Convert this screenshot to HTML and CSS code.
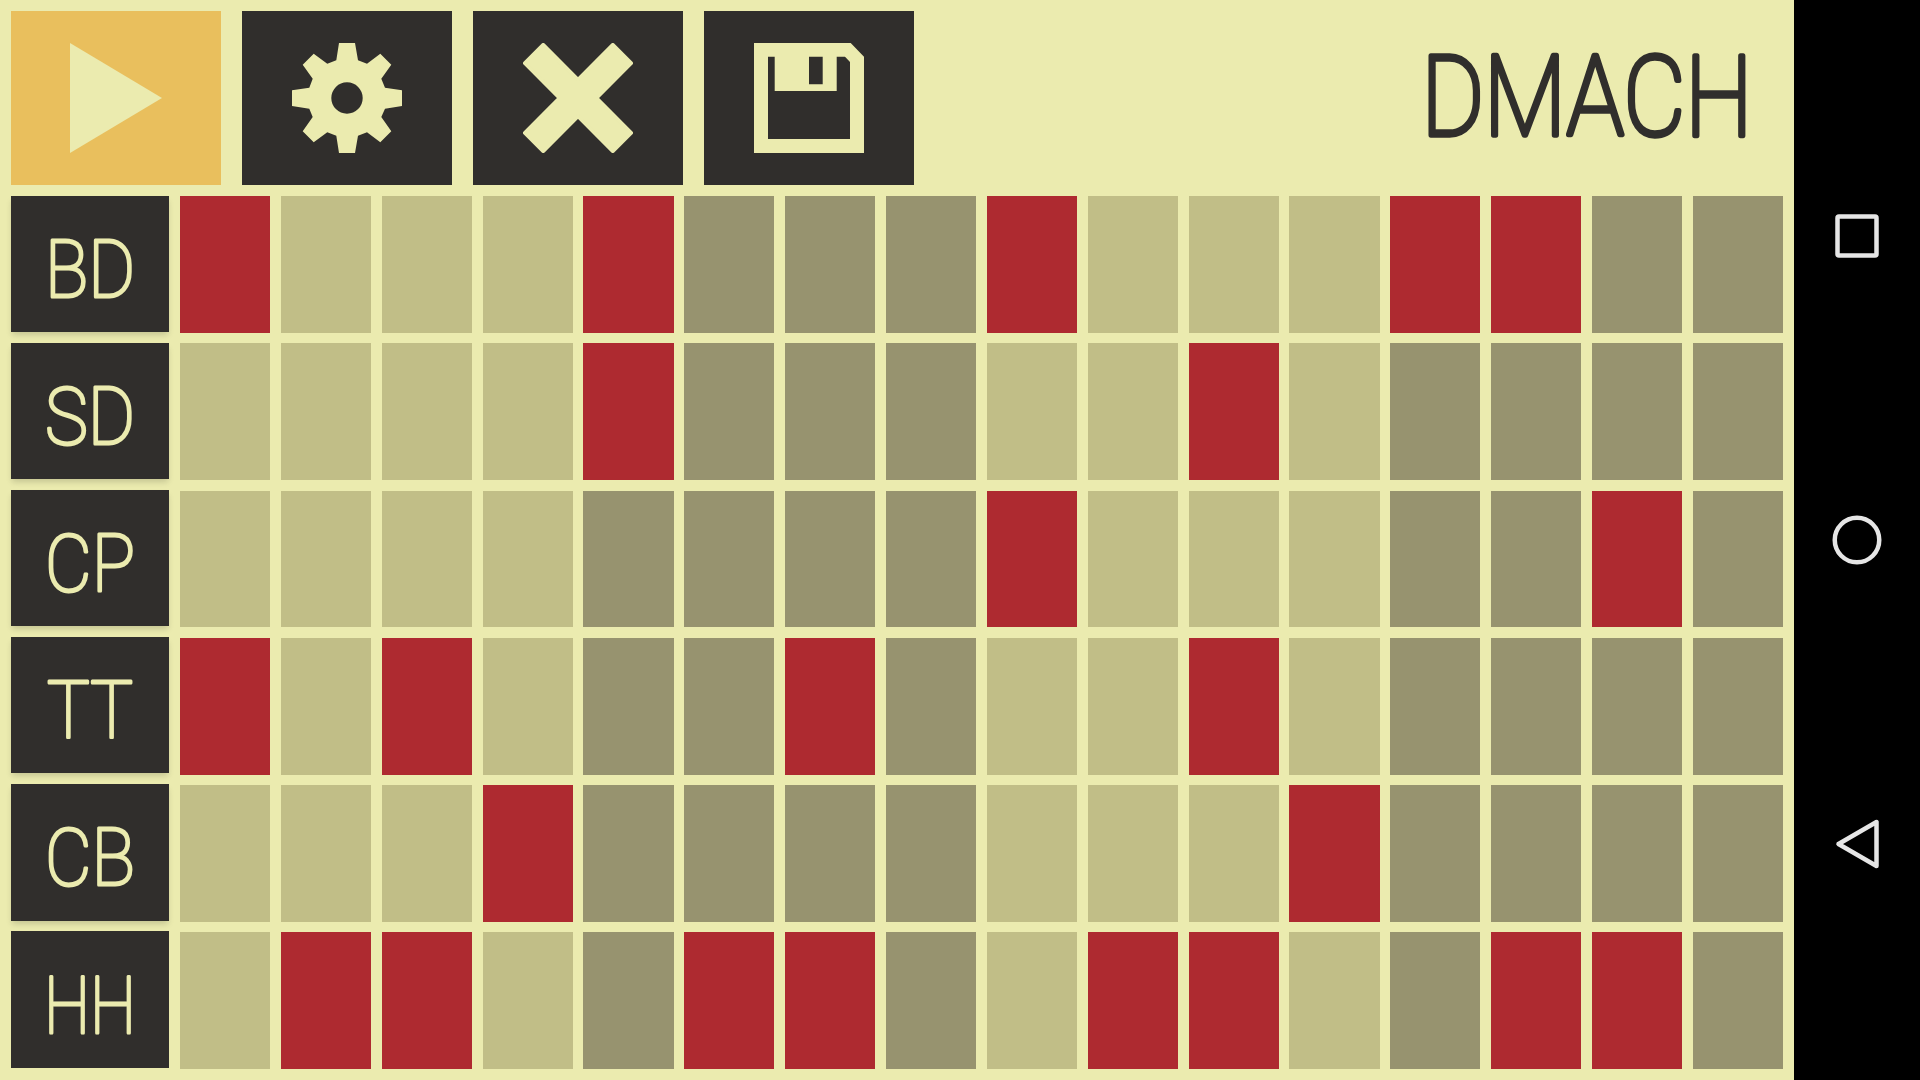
FILE: index.html
```html
<!DOCTYPE html>
<html lang="en">
<head>
    <meta charset="UTF-8">
    <meta name="viewport" content="width=device-width, initial-scale=1.0">
    <title>DMACH</title>
    <link rel="stylesheet" href="styles.css">
</head>
<body>
    <div class="screen">
        <main class="app">
            <header class="toolbar">
                <button class="tool tool-play" type="button">
                    <svg class="tool-icon" viewBox="0 0 110 110"><polygon points="9,0 101,55 9,110"/></svg>
                </button>
                <button class="tool" type="button">
                    <svg class="tool-icon" viewBox="0 0 110 110"><path fill-rule="evenodd" d="M47 0H63L66 17.3 75 20.7 88.3 10.7 99.3 21.7 89.3 35.7 93 44.7 110 47.3V63L93 65.7 89.3 74 99.3 88.3 88.3 99.3 75 89.3 66 92.7 63 110H47L44.3 92.7 35.3 89.3 21.7 99.3 10.7 88.3 20.7 74 17.3 65.7 0 63V47.3L17.3 44.7 20.7 35.7 10.7 21.7 21.7 10.7 35.3 20.7 44.3 17.3ZM55 39.3A15.7 15.7 0 1 0 55 70.7 15.7 15.7 0 1 0 55 39.3Z"/></svg>
                </button>
                <button class="tool" type="button">
                    <svg class="tool-icon icon-clear" viewBox="0 0 110 110"><polygon points="55,36.8 89.8,2 108,20.2 73.2,55 108,89.8 89.8,108 55,73.2 20.2,108 2,89.8 36.8,55 2,20.2 20.2,2"/></svg>
                </button>
                <button class="tool" type="button">
                    <svg class="tool-icon" viewBox="0 0 110 110"><path fill-rule="evenodd" d="M0 0H96.7L110 13.7V110H0ZM14 13.7V96H96V19L91 13.7H82.7V48H20.7V13.7ZM55 13.7V41.3H68.7V13.7Z"/></svg>
                </button>
                <h1 class="title">
                    <svg class="title-text" viewBox="0 0 400 174"><text x="198" y="124" textLength="331" lengthAdjust="spacingAndGlyphs">DMACH</text></svg>
                </h1>
            </header>
            <section class="sequencer">
                <div class="labels">
                    <div class="label"><svg class="label-text" viewBox="0 0 158 136"><text x="79" y="100.5" textLength="90" lengthAdjust="spacingAndGlyphs">BD</text></svg></div>
                    <div class="label"><svg class="label-text" viewBox="0 0 158 136"><text x="79" y="100.5" textLength="90" lengthAdjust="spacingAndGlyphs">SD</text></svg></div>
                    <div class="label"><svg class="label-text" viewBox="0 0 158 136"><text x="79" y="100.5" textLength="90" lengthAdjust="spacingAndGlyphs">CP</text></svg></div>
                    <div class="label"><svg class="label-text" viewBox="0 0 158 136"><text x="79" y="100.5" textLength="86" lengthAdjust="spacingAndGlyphs">TT</text></svg></div>
                    <div class="label"><svg class="label-text" viewBox="0 0 158 136"><text x="79" y="100.5" textLength="90" lengthAdjust="spacingAndGlyphs">CB</text></svg></div>
                    <div class="label"><svg class="label-text" viewBox="0 0 158 136"><text x="79" y="100.5" textLength="92" lengthAdjust="spacingAndGlyphs">HH</text></svg></div>
                </div>
                <div class="pads">
                    <div class="row">
                        <div class="step on"></div><div class="step"></div><div class="step"></div><div class="step"></div>
                        <div class="step on"></div><div class="step"></div><div class="step"></div><div class="step"></div>
                        <div class="step on"></div><div class="step"></div><div class="step"></div><div class="step"></div>
                        <div class="step on"></div><div class="step on"></div><div class="step"></div><div class="step"></div>
                    </div>
                    <div class="row">
                        <div class="step"></div><div class="step"></div><div class="step"></div><div class="step"></div>
                        <div class="step on"></div><div class="step"></div><div class="step"></div><div class="step"></div>
                        <div class="step"></div><div class="step"></div><div class="step on"></div><div class="step"></div>
                        <div class="step"></div><div class="step"></div><div class="step"></div><div class="step"></div>
                    </div>
                    <div class="row">
                        <div class="step"></div><div class="step"></div><div class="step"></div><div class="step"></div>
                        <div class="step"></div><div class="step"></div><div class="step"></div><div class="step"></div>
                        <div class="step on"></div><div class="step"></div><div class="step"></div><div class="step"></div>
                        <div class="step"></div><div class="step"></div><div class="step on"></div><div class="step"></div>
                    </div>
                    <div class="row">
                        <div class="step on"></div><div class="step"></div><div class="step on"></div><div class="step"></div>
                        <div class="step"></div><div class="step"></div><div class="step on"></div><div class="step"></div>
                        <div class="step"></div><div class="step"></div><div class="step on"></div><div class="step"></div>
                        <div class="step"></div><div class="step"></div><div class="step"></div><div class="step"></div>
                    </div>
                    <div class="row">
                        <div class="step"></div><div class="step"></div><div class="step"></div><div class="step on"></div>
                        <div class="step"></div><div class="step"></div><div class="step"></div><div class="step"></div>
                        <div class="step"></div><div class="step"></div><div class="step"></div><div class="step on"></div>
                        <div class="step"></div><div class="step"></div><div class="step"></div><div class="step"></div>
                    </div>
                    <div class="row">
                        <div class="step"></div><div class="step on"></div><div class="step on"></div><div class="step"></div>
                        <div class="step"></div><div class="step on"></div><div class="step on"></div><div class="step"></div>
                        <div class="step"></div><div class="step on"></div><div class="step on"></div><div class="step"></div>
                        <div class="step"></div><div class="step on"></div><div class="step on"></div><div class="step"></div>
                    </div>
                </div>
            </section>
        </main>
        <nav class="nav-bar">
            <svg class="nav-icon" viewBox="0 0 60 60"><rect x="10.5" y="10.5" width="39" height="39" rx="1.5"/></svg>
            <svg class="nav-icon" viewBox="0 0 60 60"><circle cx="30" cy="30" r="22.25"/></svg>
            <svg class="nav-icon" viewBox="0 0 60 60"><polygon points="11.5,30 49.5,8 49.5,52"/></svg>
        </nav>
    </div>
</body>
</html>
```

FILE: styles.css
```css
body {
    margin: 0;
    background-color: #000;
    font-family: Roboto, "Liberation Sans", sans-serif;
}

.screen {
    display: flex;
    width: 1920px;
    height: 1080px;
    overflow: hidden;
}

.app {
    box-sizing: border-box;
    width: 1794px;
    padding: 11px;
    background-color: #ebebaf;
}

.toolbar {
    display: flex;
    align-items: center;
    gap: 21px;
    height: 174px;
    margin-bottom: 11px;
}

.tool {
    display: flex;
    align-items: center;
    justify-content: center;
    width: 210px;
    height: 174px;
    padding: 0;
    border: none;
    background-color: #302e2c;
    cursor: pointer;
}

.tool-play {
    background-color: #e9bf5d;
}

.tool-icon {
    width: 110px;
    height: 110px;
    fill: #ebebaf;
}

.icon-clear {
    stroke: #ebebaf;
    stroke-width: 4;
    stroke-linejoin: round;
}

.title {
    margin: 0 -6px 0 auto;
    font-size: 112px;
    font-weight: 100;
    line-height: 1;
}

.title-text {
    display: block;
    width: 400px;
    height: 174px;
    overflow: visible;
}

.title-text text {
    fill: #302e2c;
    stroke: #302e2c;
    stroke-width: 5.5;
    stroke-linejoin: round;
    text-anchor: middle;
}

.sequencer {
    display: flex;
    gap: 11px;
    height: 873px;
}

.labels {
    display: grid;
    grid-template-rows: repeat(5, 136.15px) 137px;
    row-gap: 10.96px;
    width: 158px;
}

.label {
    display: flex;
    align-items: center;
    justify-content: center;
    background-color: #302e2c;
    font-size: 80px;
    font-weight: 100;
}

.label:not(:last-child) {
    box-shadow: 0 4px 6px -1px rgba(0, 0, 0, 0.16);
}

.label-text {
    width: 158px;
    height: 136px;
}

.label-text text {
    fill: #ebebaf;
    stroke: #ebebaf;
    stroke-width: 3;
    stroke-linejoin: round;
    text-anchor: middle;
}

.pads {
    display: grid;
    grid-template-rows: repeat(6, 136.75px);
    row-gap: 10.5px;
    flex: 1;
}

.row {
    display: grid;
    grid-template-columns: repeat(16, 1fr);
    column-gap: 10.8px;
}

.step {
    background-color: #c1be87;
}

.step:nth-child(n+5):nth-child(-n+8),
.step:nth-child(n+13) {
    background-color: #97936f;
}

.row .step.on.on {
    background-color: #ae2a30;
}

.nav-bar {
    display: flex;
    flex-direction: column;
    align-items: center;
    justify-content: center;
    gap: 244px;
    width: 126px;
}

.nav-icon {
    width: 60px;
    height: 60px;
    fill: none;
    stroke: #e6e6e6;
    stroke-width: 4.5;
    stroke-linejoin: round;
}
```
